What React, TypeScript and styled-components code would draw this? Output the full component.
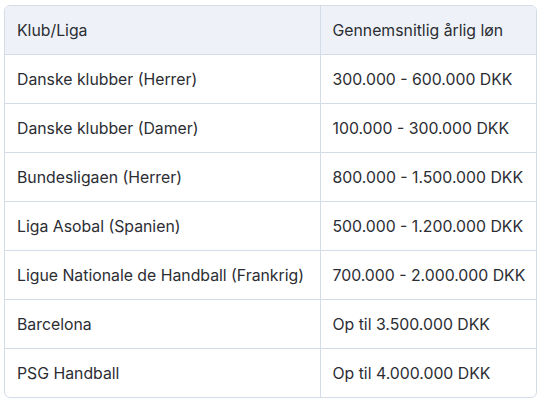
import React from "react";
import styled, { createGlobalStyle } from "styled-components";

const rows = [
  { club: "Danske klubber (Herrer)", salary: "300.000 - 600.000 DKK" },
  { club: "Danske klubber (Damer)", salary: "100.000 - 300.000 DKK" },
  { club: "Bundesligaen (Herrer)", salary: "800.000 - 1.500.000 DKK" },
  { club: "Liga Asobal (Spanien)", salary: "500.000 - 1.200.000 DKK" },
  { club: "Ligue Nationale de Handball (Frankrig)", salary: "700.000 - 2.000.000 DKK" },
  { club: "Barcelona", salary: "Op til 3.500.000 DKK" },
  { club: "PSG Handball", salary: "Op til 4.000.000 DKK" },
];

const GlobalStyle = createGlobalStyle`
  body {
    margin: 0;
    background: #ffffff;
    font-family: Inter, "Noto Sans", sans-serif;
  }
`;

const App = () => {
  return (
    <Page>
      <GlobalStyle />
      <Wrap>
        <Table>
          <colgroup>
            <col style={{ width: 315 }} />
            <col />
          </colgroup>
          <thead>
            <tr>
              <Th>Klub/Liga</Th>
              <Th>Gennemsnitlig årlig løn</Th>
            </tr>
          </thead>
          <tbody>
            {rows.map((row, index) => (
              <tr key={index}>
                <Td>{row.club}</Td>
                <Td>{row.salary}</Td>
              </tr>
            ))}
          </tbody>
        </Table>
      </Wrap>
    </Page>
  );
};

const Page = styled.main`
  padding: 5px 5px 0 4px;
`;

const Wrap = styled.div`
  width: 533px;
  box-sizing: border-box;
  border: 1px solid #d3dce7;
  border-radius: 6px;
  overflow: hidden;
`;

const Table = styled.table`
  width: 100%;
  border-collapse: collapse;
  table-layout: fixed;
  font-size: 15.8px;
  color: #2b2d33;

  tr + tr td {
    border-top: 1px solid #d3dce7;
  }
  td:first-child,
  th:first-child {
    border-right: 1px solid #d3dce7;
  }
`;

const Th = styled.th`
  height: 48px;
  padding: 0 12px;
  text-align: left;
  font-weight: 400;
  background: #eef2f8;
  border-bottom: 1px solid #d3dce7;
`;

const Td = styled.td`
  height: 48px;
  padding: 0 12px;
  white-space: nowrap;
`;

export default App;
